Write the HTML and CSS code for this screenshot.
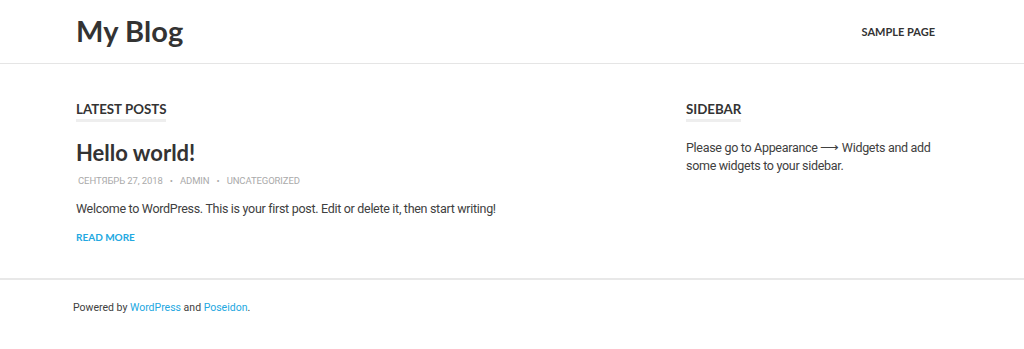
FILE: index.html
```html
<!DOCTYPE html>
<html>
<head>
<meta charset="utf-8">
<link rel="stylesheet" href="styles.css">
</head>
<body>
<header class="site-header">
  <div class="container header-inner">
    <div class="site-title">My Blog</div>
    <nav class="nav"><a href="#">SAMPLE PAGE</a></nav>
  </div>
</header>
<div class="container content">
  <main class="main">
    <h2 class="section-title"><span>LATEST POSTS</span></h2>
    <article class="post">
      <h1 class="post-title">Hello world!</h1>
      <div class="meta"><span>СЕНТЯБРЬ 27, 2018</span><span class="dot">•</span><span>ADMIN</span><span class="dot">•</span><span>UNCATEGORIZED</span></div>
      <p class="excerpt">Welcome to WordPress. This is your first post. Edit or delete it, then start writing!</p>
      <a class="more" href="#">READ MORE</a>
    </article>
  </main>
  <aside class="sidebar">
    <h2 class="section-title"><span>SIDEBAR</span></h2>
    <p class="widget-text">Please go to Appearance ⟶ Widgets and add some widgets to your sidebar.</p>
  </aside>
</div>
<footer class="site-footer">
  <div class="footer-inner">Powered by <a href="#">WordPress</a> and <a href="#">Poseidon</a>.</div>
</footer>
</body>
</html>
```
FILE: styles.css
```css
* { box-sizing: border-box; }
body {
  margin: 0;
  background: #fff;
  color: #404040;
  font-family: "Roboto", "Open Sans", sans-serif;
  font-size: 12.5px;
}
a { text-decoration: none; }
.container { width: 872px; margin: 0 auto; padding-right: 13px; }
.site-header { border-bottom: 1px solid #e5e5e5; height: 64px; }
.header-inner {
  display: flex;
  justify-content: space-between;
  align-items: center;
  height: 63px;
}
.site-title {
  font-family: "Lato", sans-serif;
  font-weight: 700;
  font-size: 29px;
  color: #333;
  letter-spacing: 0.1px;
  margin-top: -2px;
}
.nav a {
  font-family: "Lato", sans-serif;
  font-weight: 700;
  font-size: 11px;
  color: #333;
}
.content {
  display: grid;
  grid-template-columns: 610px 1fr;
  padding-top: 36px;
  height: 214px;
}
.section-title {
  margin: 0;
  font-family: "Lato", sans-serif;
  font-weight: 700;
  font-size: 13.3px;
  color: #333;
  line-height: 18px;
}
.section-title span {
  display: inline-block;
  padding-bottom: 1px;
  border-bottom: 3px solid #eeeeee;
}
.post-title {
  margin: 18px 0 0;
  font-family: "Lato", sans-serif;
  font-weight: 700;
  font-size: 22px;
  line-height: 26px;
  color: #333;
}
.meta {
  margin-top: 9px;
  font-size: 9.5px;
  color: #aaa;
  display: flex;
  gap: 7px;
  padding-left: 2px;
  letter-spacing: -0.1px;
}
.excerpt { margin: 14px 0 0; line-height: 18px; letter-spacing: -0.3px; }
.more {
  display: inline-block;
  margin-top: 13px;
  font-family: "Lato", sans-serif;
  font-weight: 700;
  font-size: 10px;
  color: #22a8e1;
}
.widget-text { margin: 17px 0 0; line-height: 18px; width: 250px; letter-spacing: -0.3px; }
.site-footer { border-top: 2px solid #e8e8e8; }
.footer-inner {
  width: 878px;
  margin: 0 auto;
  padding-top: 21px;
  font-size: 10.5px;
  color: #404040;
}
.footer-inner a { color: #22a8e1; }
```
